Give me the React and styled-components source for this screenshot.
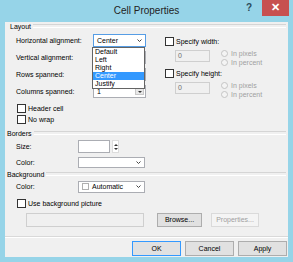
import React from "react";
import styled, { createGlobalStyle } from "styled-components";

const GlobalStyle = createGlobalStyle`
  html, body { margin: 0; padding: 0; background: #fff; }
  body {
    font-family: "Liberation Sans", Arial, sans-serif;
    font-size: 7px;
    color: #000;
  }
  * { box-sizing: border-box; }
`;

const Window = styled.div`
  width: 293px;
  height: 262px;
  background: #96d4e8;
  display: flex;
  flex-direction: column;
  padding: 0 5px 5px 5px;
`;

const TitleBar = styled.div`
  height: 22px;
  display: grid;
  grid-template-columns: 1fr auto 1fr;
`;

const Title = styled.div`
  grid-column: 2;
  font-size: 10px;
  line-height: 22px;
  color: #222;
`;

const TitleButtons = styled.div`
  grid-column: 3;
  display: flex;
  justify-content: flex-end;
  align-items: flex-start;
  margin-right: -1px;
`;

const HelpButton = styled.div`
  width: 20px;
  height: 16px;
  font-size: 10px;
  font-weight: bold;
  color: #2b4a5a;
  text-align: center;
  line-height: 16px;
  margin-right: 3px;
`;

const CloseButton = styled.div`
  width: 27px;
  height: 16px;
  background: #c75050;
  color: #fff;
  font-size: 11px;
  font-weight: bold;
  text-align: center;
  line-height: 15px;
`;

const Client = styled.div`
  flex: 1;
  background: #f0f0f0;
  display: flex;
  flex-direction: column;
`;

const GroupHeader = styled.div`
  display: flex;
  align-items: center;
  gap: 2px;
  height: 8px;
  margin-top: ${(p) => p.$top || 0}px;
  padding-left: ${(p) => p.$indent || 2}px;
  padding-right: 2px;

  &::after {
    content: "";
    flex: 1;
    height: 2px;
    border-top: 1px solid #d5d5d5;
    border-bottom: 1px solid #fff;
  }
`;

const Columns = styled.div`
  display: flex;
  margin-top: 2px;
`;

const LeftCol = styled.div`
  width: 141px;
  padding-left: 11px;
  display: flex;
  flex-direction: column;
`;

const RightCol = styled.div`
  margin-left: 19px;
  padding-top: 4px;
  display: flex;
  flex-direction: column;
`;

const FieldRow = styled.div`
  display: grid;
  grid-template-columns: ${(p) => p.$label || 77}px auto;
  align-items: center;
  height: ${(p) => p.$h || 17}px;
  margin-top: ${(p) => p.$top || 0}px;
  padding-left: ${(p) => p.$indent || 0}px;
`;

const Select = styled.div`
  position: relative;
  width: ${(p) => p.$w || 53}px;
  height: ${(p) => p.$h || 13}px;
  background: #fff;
  border: 1px solid ${(p) => (p.$focus ? "#569de5" : "#abadb3")};
  display: flex;
  align-items: center;
  padding-left: 3px;
  gap: 3px;
`;

const SelectText = styled.span`
  flex: 1;
`;

const ChevronBox = styled.span`
  width: 9px;
  display: flex;
  justify-content: center;
  margin-right: 1px;
`;

const Chevron = () => (
  <ChevronBox>
    <svg width="5" height="3" viewBox="0 0 5 3">
      <path d="M0.5 0.5 L2.5 2.5 L4.5 0.5" fill="none" stroke="#444" strokeWidth="1" />
    </svg>
  </ChevronBox>
);

const DropButton = styled.span`
  width: 9px;
  height: 7px;
  margin-right: 1px;
  background: #e8e8e8;
  border: 1px solid #c8c8c8;
  display: flex;
  align-items: center;
  justify-content: center;

  &::after {
    content: "";
    border-left: 2px solid transparent;
    border-right: 2px solid transparent;
    border-top: 2px solid #333;
  }
`;

const ListBox = styled.div`
  position: absolute;
  top: 12px;
  left: -2px;
  width: 53px;
  background: #fff;
  border: 1px solid #646464;
  z-index: 2;
`;

const ListItem = styled.div`
  height: 8px;
  line-height: 8px;
  padding-left: 2px;
  background: ${(p) => (p.$active ? "#3399ff" : "transparent")};
  color: ${(p) => (p.$active ? "#fff" : "#000")};
`;

const CheckRow = styled.label`
  display: flex;
  align-items: center;
  gap: 2px;
  height: 11px;
  margin-top: ${(p) => p.$top || 0}px;
  margin-left: ${(p) => p.$indent || 0}px;
`;

const Box = styled.span`
  width: 9px;
  height: 9px;
  background: #fff;
  border: 1px solid #333;
  flex-shrink: 0;
`;

const SmallBox = styled.span`
  width: 7px;
  height: 7px;
  border: 1px solid #b0b0b0;
  background: #fff;
  flex-shrink: 0;
`;

const SizeGroup = styled.div`
  display: flex;
  align-items: center;
  gap: 2px;
`;

const TextBox = styled.div`
  width: ${(p) => p.$w}px;
  height: ${(p) => p.$h || 13}px;
  background: ${(p) => (p.$disabled ? "#f0f0f0" : "#fff")};
  border: 1px solid ${(p) => (p.$disabled ? "#cfcfcf" : "#abadb3")};
  color: #6d6d6d;
  padding-left: 2px;
  line-height: ${(p) => (p.$h || 13) - 2}px;
`;

const Spinner = styled.div`
  width: 7px;
  height: 13px;
  display: flex;
  flex-direction: column;
  align-items: center;
  justify-content: center;
  gap: 2px;
  border: 1px solid #dcdcdc;
  background: #fff;

  &::before,
  &::after {
    content: "";
    border-left: 2px solid transparent;
    border-right: 2px solid transparent;
  }
  &::before { border-bottom: 2px solid #333; }
  &::after { border-top: 2px solid #333; }
`;

const SizeBlock = styled.div`
  display: grid;
  grid-template-columns: 46px auto;
  margin-top: ${(p) => p.$top || 0}px;
  margin-left: 10px;
`;

const InputSlot = styled.div`
  padding-top: 1px;
`;

const RadioList = styled.div`
  display: flex;
  flex-direction: column;
`;

const RadioRow = styled.div`
  display: flex;
  align-items: center;
  gap: 3px;
  height: 9px;
  color: #a0a0a0;
`;

const Radio = styled.span`
  width: 7px;
  height: 7px;
  border-radius: 50%;
  border: 1px solid #c4c4c4;
  background: #f4f4f4;
`;

const PathRow = styled.div`
  display: flex;
  align-items: center;
  height: 15px;
  margin-top: 3px;
  padding-left: 21px;
`;

const Button = styled.div`
  width: ${(p) => p.$w || 49}px;
  height: ${(p) => p.$h || 15}px;
  margin-left: ${(p) => p.$gap || 0}px;
  display: flex;
  align-items: center;
  justify-content: center;
  background: ${(p) => (p.$disabled ? "#f4f4f4" : "#e1e1e1")};
  border: 1px solid
    ${(p) => (p.$primary ? "#3399ff" : p.$disabled ? "#dadada" : "#adadad")};
  color: ${(p) => (p.$disabled ? "#a0a0a0" : "#000")};
`;

const Separator = styled.div`
  margin-top: 9px;
  height: 2px;
  border-top: 1px solid #d9d9d9;
  border-bottom: 1px solid #fff;
`;

const Footer = styled.div`
  display: flex;
  justify-content: flex-end;
  gap: 4px;
  margin-top: 3px;
  padding-right: 1px;
`;

const options = ["Default", "Left", "Right", "Center", "Justify"];

export default function App() {
  return (
    <>
      <GlobalStyle />
      <Window>
        <TitleBar>
          <Title>Cell Properties</Title>
          <TitleButtons>
            <HelpButton>?</HelpButton>
            <CloseButton>✕</CloseButton>
          </TitleButtons>
        </TitleBar>
        <Client>
          <GroupHeader $indent={5}>Layout</GroupHeader>
          <Columns>
            <LeftCol>
              <FieldRow>
                <span>Horizontal alignment:</span>
                <Select $focus>
                  <SelectText>Center</SelectText>
                  <Chevron />
                  <ListBox>
                    {options.map((o) => (
                      <ListItem key={o} $active={o === "Center"}>
                        {o}
                      </ListItem>
                    ))}
                  </ListBox>
                </Select>
              </FieldRow>
              <FieldRow>
                <span>Vertical alignment:</span>
                <Select />
              </FieldRow>
              <FieldRow>
                <span>Rows spanned:</span>
                <Select />
              </FieldRow>
              <FieldRow>
                <span>Columns spanned:</span>
                <Select>
                  <SelectText>1</SelectText>
                  <DropButton />
                </Select>
              </FieldRow>
              <CheckRow $top={3} $indent={1}>
                <Box />
                Header cell
              </CheckRow>
              <CheckRow $indent={1}>
                <Box />
                No wrap
              </CheckRow>
            </LeftCol>
            <RightCol>
              <CheckRow>
                <Box />
                Specify width:
              </CheckRow>
              <SizeBlock $top={2}>
                <InputSlot>
                  <TextBox $w={35} $h={12} $disabled>
                    0
                  </TextBox>
                </InputSlot>
                <RadioList>
                  <RadioRow>
                    <Radio />
                    In pixels
                  </RadioRow>
                  <RadioRow>
                    <Radio />
                    In percent
                  </RadioRow>
                </RadioList>
              </SizeBlock>
              <CheckRow $top={1}>
                <Box />
                Specify height:
              </CheckRow>
              <SizeBlock $top={2}>
                <InputSlot>
                  <TextBox $w={35} $h={12} $disabled>
                    0
                  </TextBox>
                </InputSlot>
                <RadioList>
                  <RadioRow>
                    <Radio />
                    In pixels
                  </RadioRow>
                  <RadioRow>
                    <Radio />
                    In percent
                  </RadioRow>
                </RadioList>
              </SizeBlock>
            </RightCol>
          </Columns>

          <GroupHeader $top={4}>Borders</GroupHeader>
          <FieldRow $label={62} $indent={11} $top={1}>
            <span>Size:</span>
            <SizeGroup>
              <TextBox $w={32} />
              <Spinner />
            </SizeGroup>
          </FieldRow>
          <FieldRow $label={62} $indent={11} $h={15}>
            <span>Color:</span>
            <Select $w={67} $h={11}>
              <SelectText />
              <Chevron />
            </Select>
          </FieldRow>

          <GroupHeader>Background</GroupHeader>
          <FieldRow $label={62} $indent={11}>
            <span>Color:</span>
            <Select $w={67} $h={12}>
              <SmallBox />
              <SelectText>Automatic</SelectText>
              <Chevron />
            </Select>
          </FieldRow>
          <CheckRow $top={3} $indent={12}>
            <Box />
            Use background picture
          </CheckRow>
          <PathRow>
            <TextBox $w={118} $h={14} $disabled />
            <Button $w={45} $h={14} $gap={13}>
              Browse...
            </Button>
            <Button $w={48} $h={14} $gap={9} $disabled>
              Properties...
            </Button>
          </PathRow>

          <Separator />
          <Footer>
            <Button $primary>OK</Button>
            <Button>Cancel</Button>
            <Button>Apply</Button>
          </Footer>
        </Client>
      </Window>
    </>
  );
}
